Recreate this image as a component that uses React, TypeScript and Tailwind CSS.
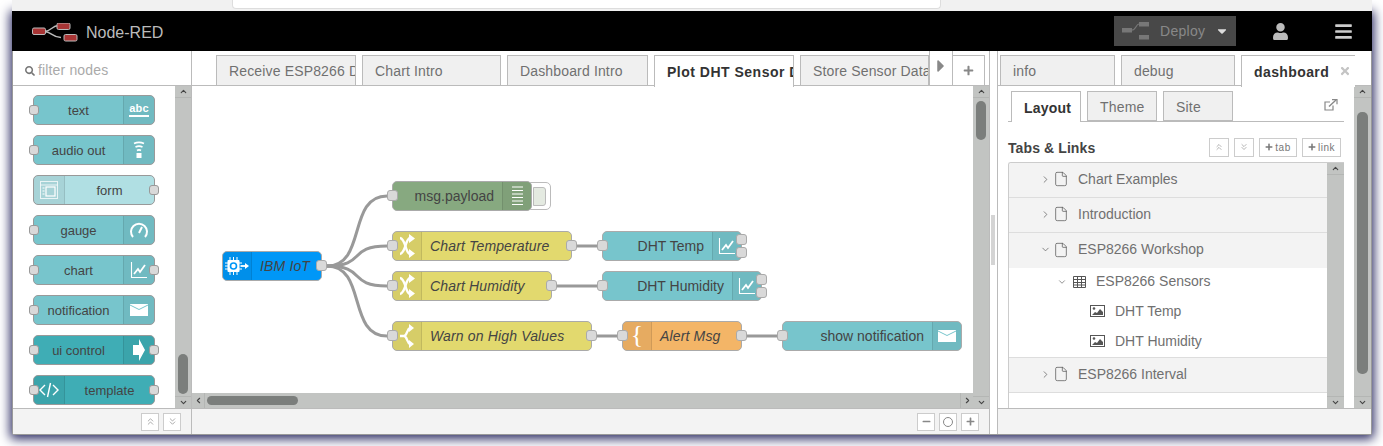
import React from "react";
import { File, ChevronRight, ChevronDown, ChevronUp, ChevronLeft, ChevronsUp, ChevronsDown } from "lucide-react";
import { FaUser, FaBars, FaSearch, FaPlus, FaMinus, FaCaretRight, FaCaretDown, FaTimes } from "react-icons/fa";

const I = ({ children, w = 20, h = 20, vb = "0 0 20 20" }: { children: React.ReactNode; w?: number; h?: number; vb?: string }) => (
  <svg width={w} height={h} viewBox={vb} fill="none" stroke="#fff" strokeWidth="1.6">{children}</svg>
);

const Abc = () => (
  <div className="flex flex-col items-center leading-none text-white text-[11px] font-bold">
    <span className="border-b-[2px] border-white pb-[1px] tracking-[0.2px]">abc</span>
  </div>
);
const Wave = () => (
  <I>
    <path d="M5 3.5a9 6 0 0 1 10 0M6.5 7a6 4 0 0 1 7 0" strokeWidth="1.7" />
    <path d="M8 10.5a3 2 0 0 1 4 0" strokeWidth="1.7" />
    <rect x="7.5" y="13" width="5" height="5" fill="#fff" stroke="none" />
  </I>
);
const Form = () => (
  <I>
    <rect x="1.5" y="1.5" width="17" height="17" strokeWidth="1" opacity=".75" />
    <path d="M1.5 5h17" strokeWidth="1" opacity=".75" />
    <rect x="7" y="7" width="9" height="9" strokeWidth="1.2" />
    <path d="M3.5 8h2M3.5 11h2M3.5 14h2" strokeWidth="1" />
  </I>
);
const Gauge = () => (
  <I>
    <path d="M4 17a8 8 0 1 1 12 0" strokeWidth="2" />
    <path d="M10 13l3-6" strokeWidth="2" />
  </I>
);
const Chart = () => (
  <I>
    <path d="M2.5 2v15.5H18" strokeWidth="1.1" />
    <path d="M5 14l4-5 2 3 5-7" strokeWidth="1.8" />
  </I>
);
const Mail = () => (
  <svg width="18" height="12" viewBox="0 0 18 12">
    <path d="M0 0h18v12H0z" fill="#fff" />
    <path d="M0 1l9 4.5L18 1" fill="none" stroke="#77c5cc" strokeWidth="1" />
  </svg>
);
const Arrow = () => (
  <svg width="12" height="22" viewBox="0 0 12 22"><path d="M0 6h6V0l6 11-6 11v-6H0z" fill="#fff" /></svg>
);
const Tpl = () => (
  <I>
    <path d="M6 5l-5 5 5 5M14 5l5 5-5 5M11.5 3l-3 14" strokeWidth="1.4" />
  </I>
);
const Shuffle = () => (
  <svg width="15" height="24" viewBox="0 0 15 24" fill="none" stroke="#fff">
    <path d="M0 4c6 1 5 15 10 16" strokeWidth="2.4" />
    <path d="M0 20c6-1 5-15 10-16" strokeWidth="2.4" />
    <path d="M9 0l6 4.5-6 4.5zM9 15l6 4.5-6 4.5z" fill="#fff" stroke="none" />
  </svg>
);
const SwitchI = () => (
  <svg width="15" height="24" viewBox="0 0 15 24" fill="none" stroke="#fff">
    <path d="M0 12h4c3 0 3-7 6-8M4 12c3 0 3 7 6 8" strokeWidth="2.4" />
    <path d="M9 0l5 4-5 4zM9 16l5 4-5 4z" fill="#fff" stroke="none" />
  </svg>
);
const Fn = () => <span className="text-white text-[26px] leading-none font-['Liberation_Serif',serif] -mt-[3px]">{"{"}</span>;
const DebugI = () => (
  <svg width="11" height="20" viewBox="0 0 11 20" stroke="#fff" strokeWidth="1.1">
    <path d="M0 1h11M0 4.5h11M0 8h11M0 11.5h11M0 15h11M0 18.5h11" />
  </svg>
);
const Chip = () => (
  <svg width="24" height="20" viewBox="0 0 24 20" fill="none">
    <path d="M5 1v18M8.5 1v18M12 1v18M0 7h17M0 10h3M0 13h17" stroke="#fff" strokeWidth="1" />
    <rect x="2.5" y="4" width="12" height="12" rx="1" fill="#fff" />
    <circle cx="8.5" cy="10" r="3" fill="none" stroke="#0097f7" strokeWidth="1.6" />
    <path d="M15.5 10h5" stroke="#fff" strokeWidth="1.8" />
    <path d="M20 7l4 3-4 3z" fill="#fff" />
  </svg>
);

const Port = ({ cls }: { cls: string }) => (
  <div className={`absolute rounded-[3px] bg-[#d9d9d9] border ${cls}`} />
);

const Scroll = ({ w, top, thumb, thumbTop }: { w: string; top: string; thumb: string; thumbTop: string }) => (
  <div className={`${w} ${top} flex flex-col shrink-0 bg-[#c2c4c2]`}>
    <div className="h-[12px] flex items-center justify-center border-b border-[#b4b6b4]">
      <ChevronUp size={9} strokeWidth={3} color="#444" />
    </div>
    <div className="flex-1 px-[3px] min-h-0">
      <div className={`${thumbTop} ${thumb} rounded-[5px] bg-[#7b7e7c]`} />
    </div>
    <div className="h-[12px] flex items-center justify-center border-t border-[#b4b6b4]">
      <ChevronDown size={9} strokeWidth={3} color="#444" />
    </div>
  </div>
);

const PaletteNode = ({
  label, bg, icon, side, inPort, outPort,
}: { label: string; bg: string; icon: React.ReactNode; side: "l" | "r"; inPort?: boolean; outPort?: boolean }) => (
  <div className={`relative w-[122px] h-[30px] rounded-[5px] border border-[#999] flex ${bg}`}>
    {side === "l" && <div className="w-[31px] shrink-0 flex items-center justify-center bg-black/5 border-r border-black/10 rounded-l-[4px]">{icon}</div>}
    <div className="flex-1 flex items-center justify-center pt-[2px] text-[13px] text-[#444] whitespace-nowrap">{label}</div>
    {side === "r" && <div className="w-[31px] shrink-0 flex items-center justify-center bg-black/5 border-l border-black/10 rounded-r-[4px]">{icon}</div>}
    {inPort && <Port cls="w-[10px] h-[10px] border-[#999] -left-[5px] top-[9px]" />}
    {outPort && <Port cls="w-[10px] h-[10px] border-[#999] -right-[5px] top-[9px]" />}
  </div>
);

const FooterBtn = ({ children, w = "w-[18px]", h = "h-[18px]" }: { children: React.ReactNode; w?: string; h?: string }) => (
  <div className={`${w} ${h} bg-white border border-[#ccc] flex items-center justify-center text-[#888]`}>{children}</div>
);

const FlowNode = ({
  pos, bg, label, icon, side, italic, out, two, inPort = true,
}: { pos: string; bg: string; label: string; icon: React.ReactNode; side: "l" | "r"; italic?: boolean; out?: boolean; two?: boolean; inPort?: boolean }) => (
  <div className={`absolute h-[30px] rounded-[5px] border border-[#aaa] flex ${bg} ${pos}`}>
    {side === "l" && <div className="w-[29px] shrink-0 flex items-center justify-center border-r rounded-l-[4px] bg-black/5 border-black/10">{icon}</div>}
    <div className={`flex-1 flex items-center text-[14px] text-[#444] pt-px whitespace-nowrap ${side === "l" ? "pl-[8px]" : "justify-end pr-[8px]"} ${italic ? "italic tracking-[0.15px]" : ""}`}>{label}</div>
    {side === "r" && <div className="w-[29px] shrink-0 flex items-center justify-center border-l rounded-r-[4px] bg-black/5 border-black/10">{icon}</div>}
    {inPort && <Port cls="w-[11px] h-[11px] border-[#aaa] -left-[6px] top-[8px]" />}
    {out && <Port cls="w-[11px] h-[11px] border-[#aaa] -right-[6px] top-[8px]" />}
    {two && <Port cls="w-[11px] h-[11px] border-[#aaa] -right-[6px] top-[2px]" />}
    {two && <Port cls="w-[11px] h-[11px] border-[#aaa] -right-[6px] top-[15px]" />}
  </div>
);

const Tab = ({ label, w, active, mr = "mr-[6px]" }: { label: string; w: string; active?: boolean; mr?: string }) => (
  <div className={`${w} ${mr} shrink-0 border border-[#bbb] overflow-hidden whitespace-nowrap flex items-center text-[14px] pl-3 pt-[2px] ${active ? "bg-white border-b-0 font-bold text-[#333] h-[32px] relative z-10 tracking-[0.5px]" : "bg-[#f0f0f0] h-[31px] self-start text-[#707070] tracking-[0.15px]"}`}>
    {label}
  </div>
);

const Img = () => (
  <svg width="15" height="12" viewBox="0 0 15 12" className="shrink-0">
    <rect x=".5" y=".5" width="14" height="11" fill="none" stroke="#555" />
    <circle cx="4" cy="3.5" r="1.3" fill="#555" />
    <path d="M2 10l3-3 2 1 3-4 3 3v3z" fill="#555" />
  </svg>
);
const TableI = () => (
  <svg width="13" height="12" viewBox="0 0 13 12" className="shrink-0" stroke="#555" fill="none">
    <path d="M.5.5h12v11H.5zM.5 3.5h12M.5 6.5h12M.5 9h12M4.5.5v11M8.5.5v11" />
  </svg>
);
const ExtLink = () => (
  <svg width="14" height="12" viewBox="0 0 14 12" fill="none" stroke="#888" strokeWidth="1.2">
    <path d="M9 6.5V11H1V3h5" />
    <path d="M5 7.5L12 1" strokeWidth="1.4" />
    <path d="M8 .6h5v4.6" />
  </svg>
);
const Logo = () => (
  <svg width="46" height="20" viewBox="0 0 46 20">
    <path d="M12 8.5c8 0 7-6 15-6M12 8.5c8 0 8 6 17 6" stroke="#bbb" strokeWidth="1.3" fill="none" />
    <rect x=".5" y="5" width="13" height="6.5" rx="1.5" fill="#a83535" stroke="#bbb" />
    <rect x="25" y="0" width="13" height="6.5" rx="1.5" fill="#a83535" stroke="#bbb" />
    <rect x="32" y="11.5" width="13" height="6.5" rx="1.5" fill="#a83535" stroke="#bbb" />
  </svg>
);
const DeployIcon = () => (
  <svg width="27" height="18" viewBox="0 0 27 18">
    <rect x="0" y="6" width="10" height="4.5" fill="#777" />
    <rect x="17" y="0" width="10" height="4.5" fill="#777" />
    <rect x="17" y="13" width="10" height="4.5" fill="#777" />
    <path d="M10 8c4 0 4-6 7-6" stroke="#777" strokeWidth="1.2" fill="none" />
  </svg>
);

const TreeRow = ({ label, open }: { label: string; open?: boolean }) => (
  <div className={`h-[35px] shrink-0 flex items-center bg-[#f3f3f3] text-[14px] text-[#707070] pl-[29px] pb-[2px] ${open ? "" : "border-b border-[#ddd]"}`}>
    <span className="w-[14px] flex justify-center">
      {open ? <ChevronDown size={11} strokeWidth={1.7} color="#666" /> : <ChevronRight size={11} strokeWidth={1.7} color="#666" />}
    </span>
    <File size={16} strokeWidth={1.1} color="#555" className="ml-[1px]" />
    <span className="ml-[9px]">{label}</span>
  </div>
);

export default function App() {
  return (
    <div className="w-[1383px] h-[446px] overflow-hidden bg-white font-['Liberation_Sans',sans-serif] flex flex-col">
      <div className="relative z-10 ml-3 w-[1360px] h-[11px] bg-[#f1f1f1] shrink-0 overflow-hidden">
        <div className="ml-[220px] w-[709px] h-[9px] bg-white border border-t-0 border-[#ddd] rounded-b-[4px]" />
      </div>
      <div className="ml-3 w-[1360px] h-[424px] shrink-0 flex flex-col bg-white border-x border-b border-[#999] shadow-[0_2px_11px_2px_#2a2a62] rounded-b-[2px]">
        {/* header */}
        <div className="h-[40px] shrink-0 bg-black flex items-center -mx-px relative">
          <div className="ml-[20px] mt-[3px] flex items-center"><Logo /></div>
          <span className="ml-[8px] mt-[3px] text-[#bbb] text-[16px] font-light">Node-RED</span>
          <div className="ml-auto flex items-center">
            <div className="w-[122px] h-[30px] bg-[#484848] flex items-center pl-[8px] text-[#888] text-[14px] tracking-[0.3px]">
              <DeployIcon />
              <span className="ml-[11px]">Deploy</span>
              <FaCaretDown size={14} color="#ddd" className="ml-[10px]" />
            </div>
            <FaUser size={17} color="#bbb" className="ml-[36px]" />
            <FaBars size={19} color="#ccc" className="ml-[45px] mr-[19px]" />
          </div>
        </div>
        <div className="flex-1 min-h-0 flex">
          {/* palette */}
          <div className="w-[179px] shrink-0 flex flex-col border-r border-[#bbb]">
            <div className="h-[35px] shrink-0 border-b border-[#bbb] flex items-center pl-[12px] pt-[5px] text-[14px] text-[#aaa] tracking-[0.15px]">
              <FaSearch size={10} color="#777" />
              <span className="ml-[3px]">filter nodes</span>
            </div>
            <div className="flex-1 min-h-0 flex">
              <div className="flex-1 flex flex-col gap-[10px] pl-[20px] pt-[9px] overflow-hidden">
                <PaletteNode label="text" bg="bg-[#77c5cc]" side="r" inPort icon={<Abc />} />
                <PaletteNode label="audio out" bg="bg-[#77c5cc]" side="r" inPort icon={<Wave />} />
                <PaletteNode label="form" bg="bg-[#b0dfe3]" side="l" outPort icon={<Form />} />
                <PaletteNode label="gauge" bg="bg-[#77c5cc]" side="r" inPort icon={<Gauge />} />
                <PaletteNode label="chart" bg="bg-[#77c5cc]" side="r" inPort outPort icon={<Chart />} />
                <PaletteNode label="notification" bg="bg-[#77c5cc]" side="r" inPort icon={<Mail />} />
                <PaletteNode label="ui control" bg="bg-[#3fadb5]" side="r" inPort outPort icon={<Arrow />} />
                <PaletteNode label="template" bg="bg-[#3fadb5]" side="l" inPort outPort icon={<Tpl />} />
              </div>
              <Scroll w="w-[16px]" top="h-full" thumb="h-[40px]" thumbTop="mt-[256px]" />
            </div>
            <div className="h-[26px] shrink-0 border-t border-[#bbb] bg-[#f3f3f3] flex items-center justify-end gap-[4px] pr-[10px]">
              <FooterBtn><ChevronsUp size={11} strokeWidth={1.5} /></FooterBtn>
              <FooterBtn><ChevronsDown size={11} strokeWidth={1.5} /></FooterBtn>
            </div>
          </div>

          {/* workspace */}
          <div className="w-[798px] shrink-0 flex flex-col border-r border-[#bbb]">
            <div className="h-[35px] shrink-0 border-b border-[#bbb] flex pt-[4px] pl-[24px] relative">
              <Tab label="Receive ESP8266 Devices" w="w-[140px]" />
              <Tab label="Chart Intro" w="w-[139px]" />
              <Tab label="Dashboard Intro" w="w-[141px]" />
              <Tab label="Plot DHT Sensor Data" w="w-[140px]" active />
              <Tab label="Store Sensor Data" w="w-[129px]" mr="mr-0" />
              <div className="w-[24px] h-[34px] -mt-[4px] bg-white border-x border-[#bbb] flex justify-center pt-[5px] shrink-0">
                <FaCaretRight size={20} color="#888" />
              </div>
              <div className="w-[32px] h-[31px] bg-white border border-l-0 border-[#bbb] flex items-center justify-center shrink-0">
                <FaPlus size={11} color="#888" />
              </div>
            </div>
            <div className="flex-1 min-h-0 flex">
              <div className="flex-1 min-w-0 flex flex-col">
                <div className="relative flex-1 min-h-0 overflow-hidden bg-white">
                  <svg className="absolute inset-0" width="781" height="306" fill="none" stroke="#999" strokeWidth="3">
                    <path d="M135 180C175 180 155 110 195 110" />
                    <path d="M135 180C175 180 155 160 195 160" />
                    <path d="M135 180C175 180 155 200 195 200" />
                    <path d="M135 180C175 180 155 250 195 250" />
                    <path d="M385 160H410M365 200H410M405 250H430M555 250H590" />
                  </svg>
                  <FlowNode pos="left-[30px] top-[165px] w-[100px]" bg="bg-[#0097f7]" label="IBM IoT" italic side="l" inPort={false} out icon={<Chip />} />
                  <div className="absolute left-[338px] top-[96px] w-[21px] h-[28px] rounded-r-[5px] border border-[#bbb] bg-white flex items-center justify-end pr-[4px]">
                    <div className="w-[13px] h-[19px] rounded-r-[3px] bg-[#e4eae1] border border-[#bbb]" />
                  </div>
                  <FlowNode pos="left-[200px] top-[95px] w-[140px]" bg="bg-[#87a980]" label="msg.payload" side="r" icon={<DebugI />} />
                  <FlowNode pos="left-[200px] top-[145px] w-[180px]" bg="bg-[#e2d96e]" label="Chart Temperature" italic side="l" out icon={<Shuffle />} />
                  <FlowNode pos="left-[200px] top-[185px] w-[160px]" bg="bg-[#e2d96e]" label="Chart Humidity" italic side="l" out icon={<Shuffle />} />
                  <FlowNode pos="left-[200px] top-[235px] w-[200px]" bg="bg-[#e2d96e]" label="Warn on High Values" italic side="l" out icon={<SwitchI />} />
                  <FlowNode pos="left-[410px] top-[145px] w-[140px]" bg="bg-[#77c5cc]" label="DHT Temp" side="r" two icon={<Chart />} />
                  <FlowNode pos="left-[410px] top-[185px] w-[160px]" bg="bg-[#77c5cc]" label="DHT Humidity" side="r" two icon={<Chart />} />
                  <FlowNode pos="left-[430px] top-[235px] w-[120px]" bg="bg-[#f3b567]" label="Alert Msg" italic side="l" out icon={<Fn />} />
                  <FlowNode pos="left-[590px] top-[235px] w-[180px]" bg="bg-[#77c5cc]" label="show notification" side="r" icon={<Mail />} />
                </div>
                <div className="h-[15px] shrink-0 bg-[#c2c4c2] flex items-center">
                  <div className="w-[13px] h-full flex items-center justify-center border-r border-[#b4b6b4]"><ChevronLeft size={9} strokeWidth={3} color="#444" /></div>
                  <div className="flex-1 py-[3px] pl-[2px]"><div className="w-[91px] h-[9px] rounded-[5px] bg-[#7b7e7c]" /></div>
                  <div className="w-[13px] h-full flex items-center justify-center border-l border-[#b4b6b4]"><ChevronRight size={9} strokeWidth={3} color="#444" /></div>
                </div>
              </div>
              <Scroll w="w-[16px]" top="h-full" thumb="h-[39px]" thumbTop="mt-[3px]" />
            </div>
            <div className="h-[26px] shrink-0 border-t border-[#bbb] bg-[#f3f3f3] flex items-center justify-end gap-[4px] pr-[10px]">
              <FooterBtn><FaMinus size={9} color="#888" /></FooterBtn>
              <FooterBtn><span className="w-[10px] h-[10px] rounded-full border-[1.5px] border-[#888]" /></FooterBtn>
              <FooterBtn><FaPlus size={9} color="#888" /></FooterBtn>
            </div>
          </div>

          {/* separator */}
          <div className="w-[7px] shrink-0 bg-white flex items-start justify-start pl-[1px] pt-[164px]">
            <div className="w-[4px] h-[50px] bg-[#d4d4d4]" />
          </div>

          {/* sidebar */}
          <div className="flex-1 min-w-0 flex flex-col border-l border-[#bbb]">
            <div className="h-[35px] shrink-0 border-b border-[#bbb] flex pt-[4px] pl-[2px] relative">
              <Tab label="info" w="w-[115px]" />
              <Tab label="debug" w="w-[114px]" />
              <div className="w-[114px] h-[32px] bg-white border-l border-t border-[#bbb] relative z-10 flex items-center pl-[12px] pt-[2px] text-[14px] font-bold text-[#333] tracking-[0.4px] whitespace-nowrap">
                dashboard
                <FaTimes size={12} color="#c4c4c4" className="absolute right-[4px] top-[9px]" />
              </div>
            </div>
            <div className="flex-1 min-h-0 flex">
              <div className="flex-1 min-w-0 flex flex-col pl-[10px] pr-[10px] pt-[5px]">
                <div className="h-[31px] shrink-0 border-b border-[#bbb] flex pl-[3px] relative">
                  <div className="w-[70px] h-[31px] bg-white border border-b-0 border-[#bbb] font-bold text-[14px] text-[#333] flex items-center pl-[12px] pt-[2px] relative z-10 mr-[6px] tracking-[0.2px]">Layout</div>
                  <div className="w-[70px] h-[30px] bg-[#f0f0f0] border border-[#bbb] text-[14px] text-[#707070] flex items-center pl-[12px] pt-[2px] mr-[6px] tracking-[0.2px]">Theme</div>
                  <div className="w-[70px] h-[30px] bg-[#f0f0f0] border border-[#bbb] text-[14px] text-[#707070] flex items-center pl-[12px] pt-[2px] tracking-[0.2px]">Site</div>
                  <div className="ml-auto mr-[6px] mt-[8px]"><ExtLink /></div>
                </div>
                <div className="h-[40px] shrink-0 flex items-center justify-between pt-[10px]">
                  <span className="text-[14px] font-bold text-[#444] tracking-[0.1px] mt-[2px]">Tabs &amp; Links</span>
                  <div className="flex gap-[5px] mr-[3px]">
                    <FooterBtn w="w-[20px]" h="h-[19px]"><ChevronsUp size={10} strokeWidth={1.5} /></FooterBtn>
                    <FooterBtn w="w-[20px]" h="h-[19px]"><ChevronsDown size={10} strokeWidth={1.5} /></FooterBtn>
                    <FooterBtn w="w-[38px]" h="h-[19px]"><FaPlus size={8} color="#777" /><span className="ml-[2px] text-[10px] text-[#777] tracking-[0.5px]">tab</span></FooterBtn>
                    <FooterBtn w="w-[39px]" h="h-[19px]"><FaPlus size={8} color="#777" /><span className="ml-[2px] text-[10px] text-[#777] tracking-[0.5px]">link</span></FooterBtn>
                  </div>
                </div>
                <div className="flex-1 min-h-0 flex border-t border-[#ccc] rounded-tl-[3px] overflow-hidden border-l">
                  <div className="flex-1 min-w-0 flex flex-col overflow-hidden">
                    <TreeRow label="Chart Examples" />
                    <TreeRow label="Introduction" />
                    <TreeRow label="ESP8266 Workshop" open />
                    <div className="h-[90px] shrink-0 border-b border-[#ddd] flex flex-col text-[14px] text-[#707070]">
                      <div className="h-[27px] flex items-center pl-[46px]">
                        <span className="w-[14px] flex justify-center"><ChevronDown size={10} strokeWidth={1.7} color="#666" /></span>
                        <span className="ml-[4px]"><TableI /></span>
                        <span className="ml-[10px]">ESP8266 Sensors</span>
                      </div>
                      <div className="h-[30px] mt-[1px] flex items-center pl-[81px]"><Img /><span className="ml-[10px]">DHT Temp</span></div>
                      <div className="h-[30px] flex items-center pl-[81px]"><Img /><span className="ml-[10px]">DHT Humidity</span></div>
                    </div>
                    <TreeRow label="ESP8266 Interval" />
                  </div>
                  <Scroll w="w-[17px]" top="h-full" thumb="h-0" thumbTop="mt-0" />
                </div>
              </div>
              <Scroll w="w-[17px]" top="h-full" thumb="h-[262px]" thumbTop="mt-[14px]" />
            </div>
            <div className="h-[26px] shrink-0 border-t border-[#bbb] bg-[#f3f3f3]" />
          </div>
        </div>
      </div>
    </div>
  );
}
